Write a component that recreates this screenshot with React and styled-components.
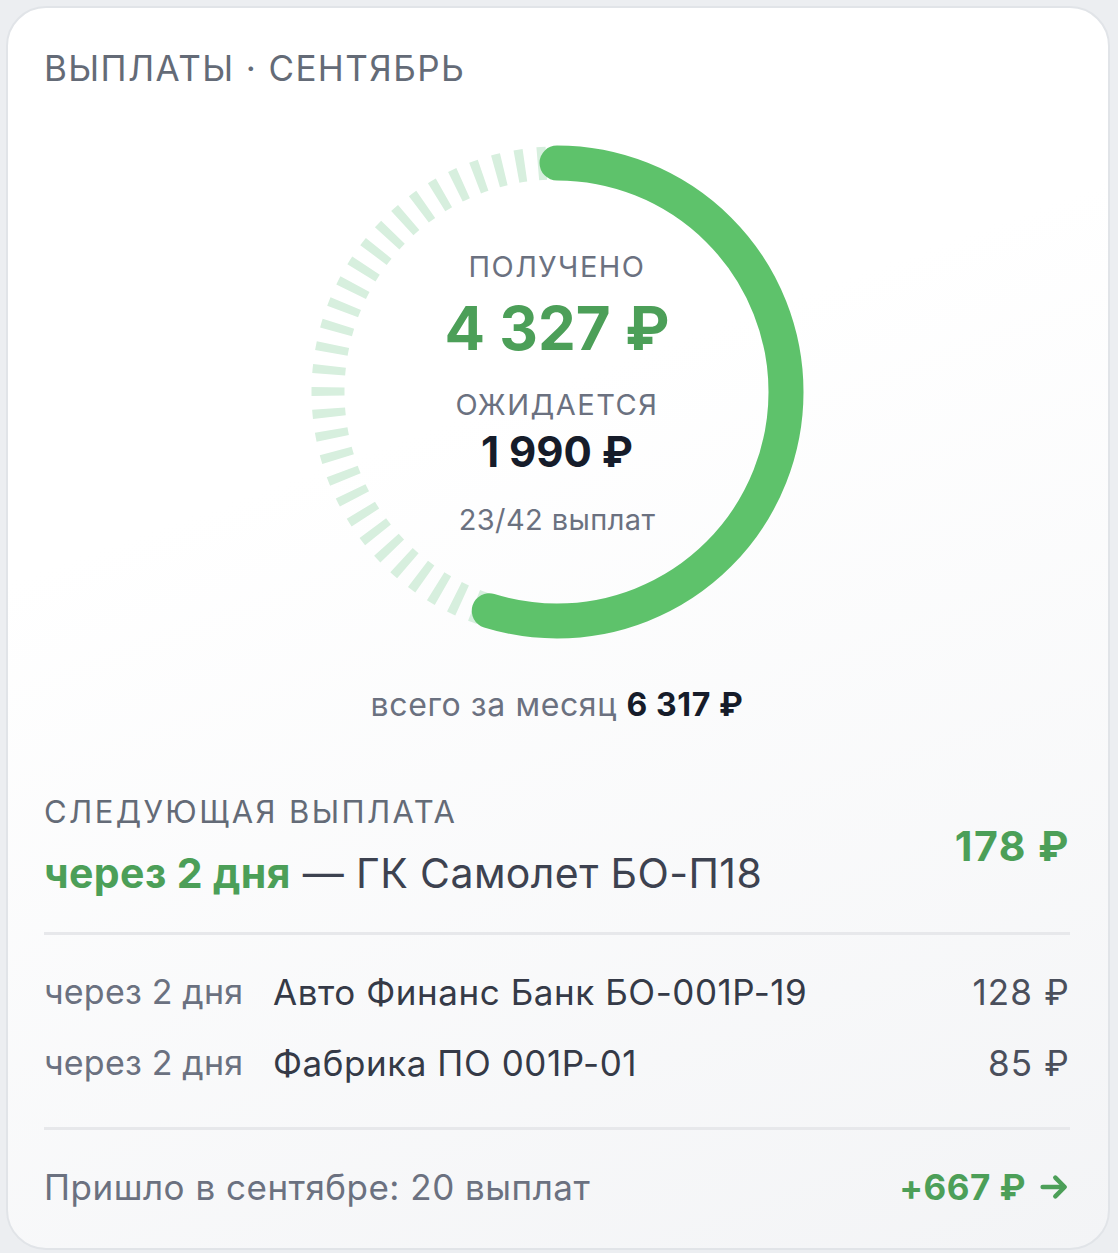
import React from 'react';
import styled, { createGlobalStyle } from 'styled-components';

const GlobalStyle = createGlobalStyle`
  html, body {
    margin: 0;
    padding: 0;
    background: #eceef1;
  }
  body {
    font-family: Inter, "Noto Sans", "Liberation Sans", sans-serif;
    -webkit-font-smoothing: antialiased;
  }
`;

const GREEN = '#4c9f58';
const RING = '#5ec26b';
const TRACK = '#d7efde';

const payouts = [
  { when: 'через 2 дня', name: 'Авто Финанс Банк БО-001Р-19', amount: '128 ₽' },
  { when: 'через 2 дня', name: 'Фабрика ПО 001Р-01', amount: '85 ₽' },
];

const Card = styled.div`
  box-sizing: border-box;
  width: 1104px;
  margin: 6px 0 3px 6px;
  padding: 0 38px 36px 36px;
  border: 2px solid #e1e4e8;
  border-radius: 40px;
  background: linear-gradient(160deg, #ffffff 35%, #f3f4f6 100%);
  display: flex;
  flex-direction: column;
`;

const Title = styled.div`
  margin-top: 38px;
  font-size: 35px;
  line-height: 44px;
  letter-spacing: 1.4px;
  color: #646b77;
`;

const RingWrap = styled.div`
  margin: 52px auto 0;
  width: 500px;
  height: 500px;
  display: grid;
  place-items: center;

  & > * {
    grid-area: 1 / 1;
  }
`;

const RingText = styled.div`
  display: flex;
  flex-direction: column;
  align-items: center;
  margin-top: 2px;
`;

const Caption = styled.div`
  font-size: ${({ $size }) => $size || 29}px;
  line-height: 36px;
  letter-spacing: ${({ $spacing }) => $spacing ?? 1.5}px;
  color: #6b7180;
  margin-top: ${({ $top }) => $top || 0}px;
`;

const Amount = styled.div`
  font-weight: 700;
  font-size: ${({ $size }) => $size}px;
  line-height: ${({ $size }) => $size + 6}px;
  color: ${({ $color }) => $color};
  margin-top: ${({ $top }) => $top || 0}px;
`;

const Total = styled.div`
  margin-top: 43px;
  text-align: center;
  font-size: 32px;
  line-height: 40px;
  letter-spacing: 0.6px;
  color: #6b7180;

  b {
    font-weight: 700;
    color: #161c2a;
  }
`;

const SectionLabel = styled.div`
  font-size: 31px;
  line-height: 40px;
  letter-spacing: 2.4px;
  color: #646b77;
`;

const NextBlock = styled.div`
  margin-top: 67px;
  display: flex;
  align-items: center;
  justify-content: space-between;
`;

const NextLine = styled.div`
  margin-top: 16px;
  font-size: 41px;
  line-height: 50px;
  letter-spacing: 0.4px;
  color: #3d4250;

  strong {
    color: ${GREEN};
    font-weight: 700;
  }
`;

const NextAmount = styled.div`
  font-size: 41px;
  font-weight: 700;
  letter-spacing: 1.5px;
  color: ${GREEN};
  margin-top: 2px;
`;

const Divider = styled.hr`
  margin: ${({ $top }) => $top}px 0 0;
  border: 0;
  height: 3px;
  background: #e7e8eb;
`;

const List = styled.div`
  margin-top: 32px;
  display: flex;
  flex-direction: column;
  gap: 21px;
`;

const Row = styled.div`
  display: grid;
  grid-template-columns: 229px 1fr auto;
  align-items: center;
  font-size: 35px;
  line-height: 50px;
  letter-spacing: 0.5px;
`;

const When = styled.span`
  color: #6b7180;
  font-size: 34px;
  letter-spacing: 0.2px;
`;

const Name = styled.span`
  color: #353a47;
  letter-spacing: 0.55px;
`;

const RowAmount = styled.span`
  color: #4a4f5c;
  letter-spacing: 1.2px;
`;

const Footer = styled.div`
  margin-top: 32px;
  display: flex;
  justify-content: space-between;
  align-items: center;
  font-size: 35px;
  line-height: 50px;
  letter-spacing: 0.5px;
  color: #6b7180;
`;

const FooterLink = styled.span`
  display: inline-flex;
  align-items: center;
  gap: 12px;
  font-weight: 700;
  letter-spacing: 0.5px;
  color: ${GREEN};
`;

const ProgressRing = ({ done, total }) => {
  const r = 229;
  const len = 2 * Math.PI * r;
  const filled = (done / total) * len;
  return (
    <svg width="500" height="500" viewBox="0 0 500 500">
      <g transform="rotate(-90 250 250)">
        <circle
          cx="250"
          cy="250"
          r={r}
          fill="none"
          stroke={TRACK}
          strokeWidth="33"
          strokeDasharray="8.5 13"
        />
        <circle
          cx="250"
          cy="250"
          r={r}
          fill="none"
          stroke={RING}
          strokeWidth="35"
          strokeLinecap="round"
          strokeDasharray={`${filled} ${len}`}
        />
      </g>
    </svg>
  );
};

const ArrowRight = () => (
  <svg width="32" height="32" viewBox="0 0 24 24" fill="none" stroke={GREEN} strokeWidth="3.4" strokeLinecap="round" strokeLinejoin="round">
    <path d="M3.5 12h16" />
    <path d="M13 5 20 12 13 19" />
  </svg>
);

export default function App() {
  return (
    <>
      <GlobalStyle />
      <Card>
        <Title>ВЫПЛАТЫ · СЕНТЯБРЬ</Title>

        <RingWrap>
          <ProgressRing done={23} total={42} />
          <RingText>
            <Caption>ПОЛУЧЕНО</Caption>
            <Amount $size={60} $color={GREEN} $top={10}>4 327 ₽</Amount>
            <Caption $top={26}>ОЖИДАЕТСЯ</Caption>
            <Amount $size={42} $color="#161c2a" $top={5}>1 990 ₽</Amount>
            <Caption $size={29} $spacing={0.4} $top={26}>23/42 выплат</Caption>
          </RingText>
        </RingWrap>

        <Total>
          всего за месяц <b>6 317 ₽</b>
        </Total>

        <NextBlock>
          <div>
            <SectionLabel>СЛЕДУЮЩАЯ ВЫПЛАТА</SectionLabel>
            <NextLine>
              <strong>через 2 дня</strong> — ГК Самолет БО-П18
            </NextLine>
          </div>
          <NextAmount>178 ₽</NextAmount>
        </NextBlock>

        <Divider $top={34} />

        <List>
          {payouts.map((p) => (
            <Row key={p.name}>
              <When>{p.when}</When>
              <Name>{p.name}</Name>
              <RowAmount>{p.amount}</RowAmount>
            </Row>
          ))}
        </List>

        <Divider $top={39} />

        <Footer>
          <span>Пришло в сентябре: 20 выплат</span>
          <FooterLink>
            +667 ₽ <ArrowRight />
          </FooterLink>
        </Footer>
      </Card>
    </>
  );
}
